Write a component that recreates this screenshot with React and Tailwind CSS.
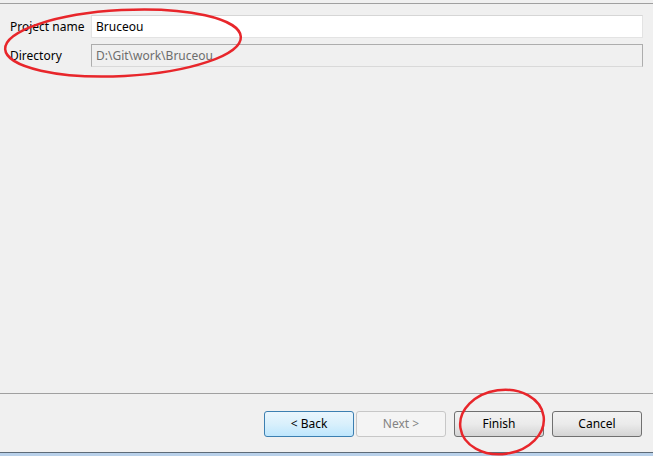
const btn = 'w-[90px] h-[26px] rounded-[3px] border text-[12px] flex items-center justify-center';

export default function App() {
  return (
    <div
      className="relative w-[653px] h-[456px] bg-[#f0f0f0] flex flex-col overflow-hidden text-black"
      style={{ fontFamily: '"Noto Sans", "Liberation Sans", sans-serif' }}
    >
      <div className="h-[3px]" />
      <div className="border-t border-[#a0a0a0]" />
      <div className="flex flex-col gap-[6px] pt-[11px] pl-[10px] pr-[10px]">
        <div className="flex items-center">
          <span className="w-[81px] text-[12px]">Project name</span>
          <div className="flex-1 h-[23px] bg-white border border-[#e3e3e3] border-t-[#d6d6d6] flex items-center pl-[4px] text-[12px]">
            Bruceou
          </div>
        </div>
        <div className="flex items-center">
          <span className="w-[81px] text-[12px]">Directory</span>
          <div className="flex-1 h-[23px] bg-[#f0f0f0] border border-[#adadad] border-b-[#d9d9d9] flex items-center pl-[4px] text-[12px] text-[#6d6d6d]">
            D:\Git\work\Bruceou
          </div>
        </div>
      </div>
      <div className="flex-1" />
      <div className="border-t border-[#a0a0a0]" />
      <div className="flex justify-end pt-[17px] pr-[11px] h-[58px]">
        <button className={`${btn} border-[#3c7fb1] bg-gradient-to-b from-[#eaf6fd] via-[#d9f0fc] to-[#bee6fd]`}>
          &lt; Back
        </button>
        <button className={`${btn} ml-[2px] border-[#c7c7c7] bg-[#f4f4f4] text-[#838383]`}>
          Next &gt;
        </button>
        <button className={`${btn} ml-[8px] border-[#707070] bg-gradient-to-b from-[#f2f2f2] via-[#ebebeb] to-[#d4d4d4]`}>
          Finish
        </button>
        <button className={`${btn} ml-[8px] border-[#707070] bg-gradient-to-b from-[#f2f2f2] via-[#ebebeb] to-[#d4d4d4]`}>
          Cancel
        </button>
      </div>
      <div className="border-t border-[#5d6b78]" />
      <div className="h-[3px] bg-[#b9d1ea]" />

      <svg className="absolute left-0 top-0 pointer-events-none" width="653" height="456">
        <ellipse cx="123" cy="43" rx="118" ry="33" fill="none" stroke="#e8262b" strokeWidth="2.5" transform="rotate(-3 123 43)" />
        <ellipse cx="502" cy="422" rx="42" ry="32" fill="none" stroke="#e8262b" strokeWidth="2.5" transform="rotate(-8 502 422)" />
      </svg>
    </div>
  );
}
